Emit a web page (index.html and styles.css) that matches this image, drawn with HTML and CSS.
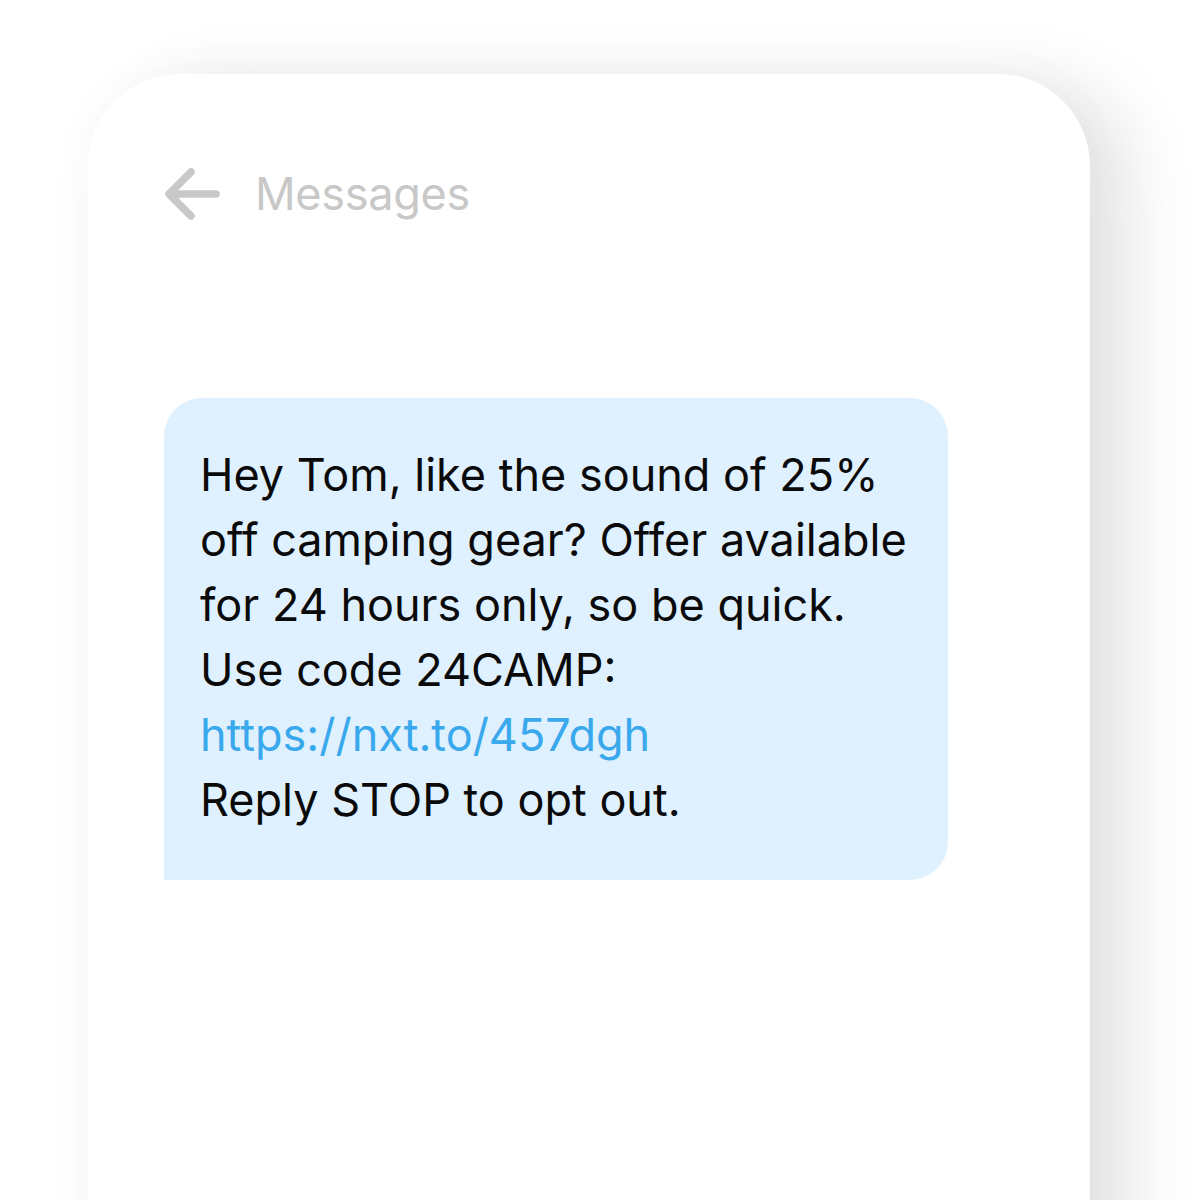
FILE: index.html
```html
<!DOCTYPE html>
<html>
<head>
<meta charset="utf-8">
<link rel="stylesheet" href="styles.css">
</head>
<body>
<div class="stage">
  <div class="phone">
    <div class="header">
      <svg class="back" width="60" height="54" viewBox="0 0 60 54">
        <path d="M29 5 L7 27 L29 49 M8 27 H54" fill="none" stroke="#c8c8c8" stroke-width="7.5" stroke-linecap="round" stroke-linejoin="round"/>
      </svg>
      <span class="title">Messages</span>
    </div>
    <div class="bubble">
      <p class="msg">Hey Tom, like the sound of 25%<br>off camping gear? Offer available<br>for 24 hours only, so be quick.<br>Use code 24CAMP:<br><span class="link">https://nxt.to/457dgh</span><br>Reply STOP to opt out.</p>
    </div>
  </div>
</div>
</body>
</html>
```
FILE: styles.css
```css
html, body {
  margin: 0;
  padding: 0;
  background: #ffffff;
}
.stage {
  width: 1200px;
  height: 1200px;
  overflow: hidden;
  padding: 74px 0 0 88px;
  box-sizing: border-box;
}
.phone {
  width: 1002px;
  height: 1300px;
  background: #ffffff;
  border-radius: 92px 92px 0 0;
  box-shadow: 40px 10px 70px rgba(0, 0, 0, 0.11), 0 0 60px rgba(0, 0, 0, 0.025);
  padding: 92px 0 0 74px;
  box-sizing: border-box;
}
.header {
  display: flex;
  align-items: center;
  gap: 33px;
  height: 54px;
}
.back {
  display: block;
  margin-top: 1px;
}
.title {
  font-family: "Inter", "Noto Sans", sans-serif;
  font-size: 45px;
  color: #c8c8c8;
  letter-spacing: -0.3px;
}
.bubble {
  margin-top: 178px;
  margin-left: 2px;
  width: 784px;
  height: 482px;
  background: #dff0fe;
  border-radius: 38px 38px 38px 0;
  padding: 44px 0 0 36px;
  box-sizing: border-box;
}
.msg {
  margin: 0;
  font-family: "Inter", "Noto Sans", sans-serif;
  font-size: 45px;
  line-height: 65px;
  color: #0a0a0a;
  letter-spacing: 0;
}
.link {
  color: #3aa8ec;
}
```
